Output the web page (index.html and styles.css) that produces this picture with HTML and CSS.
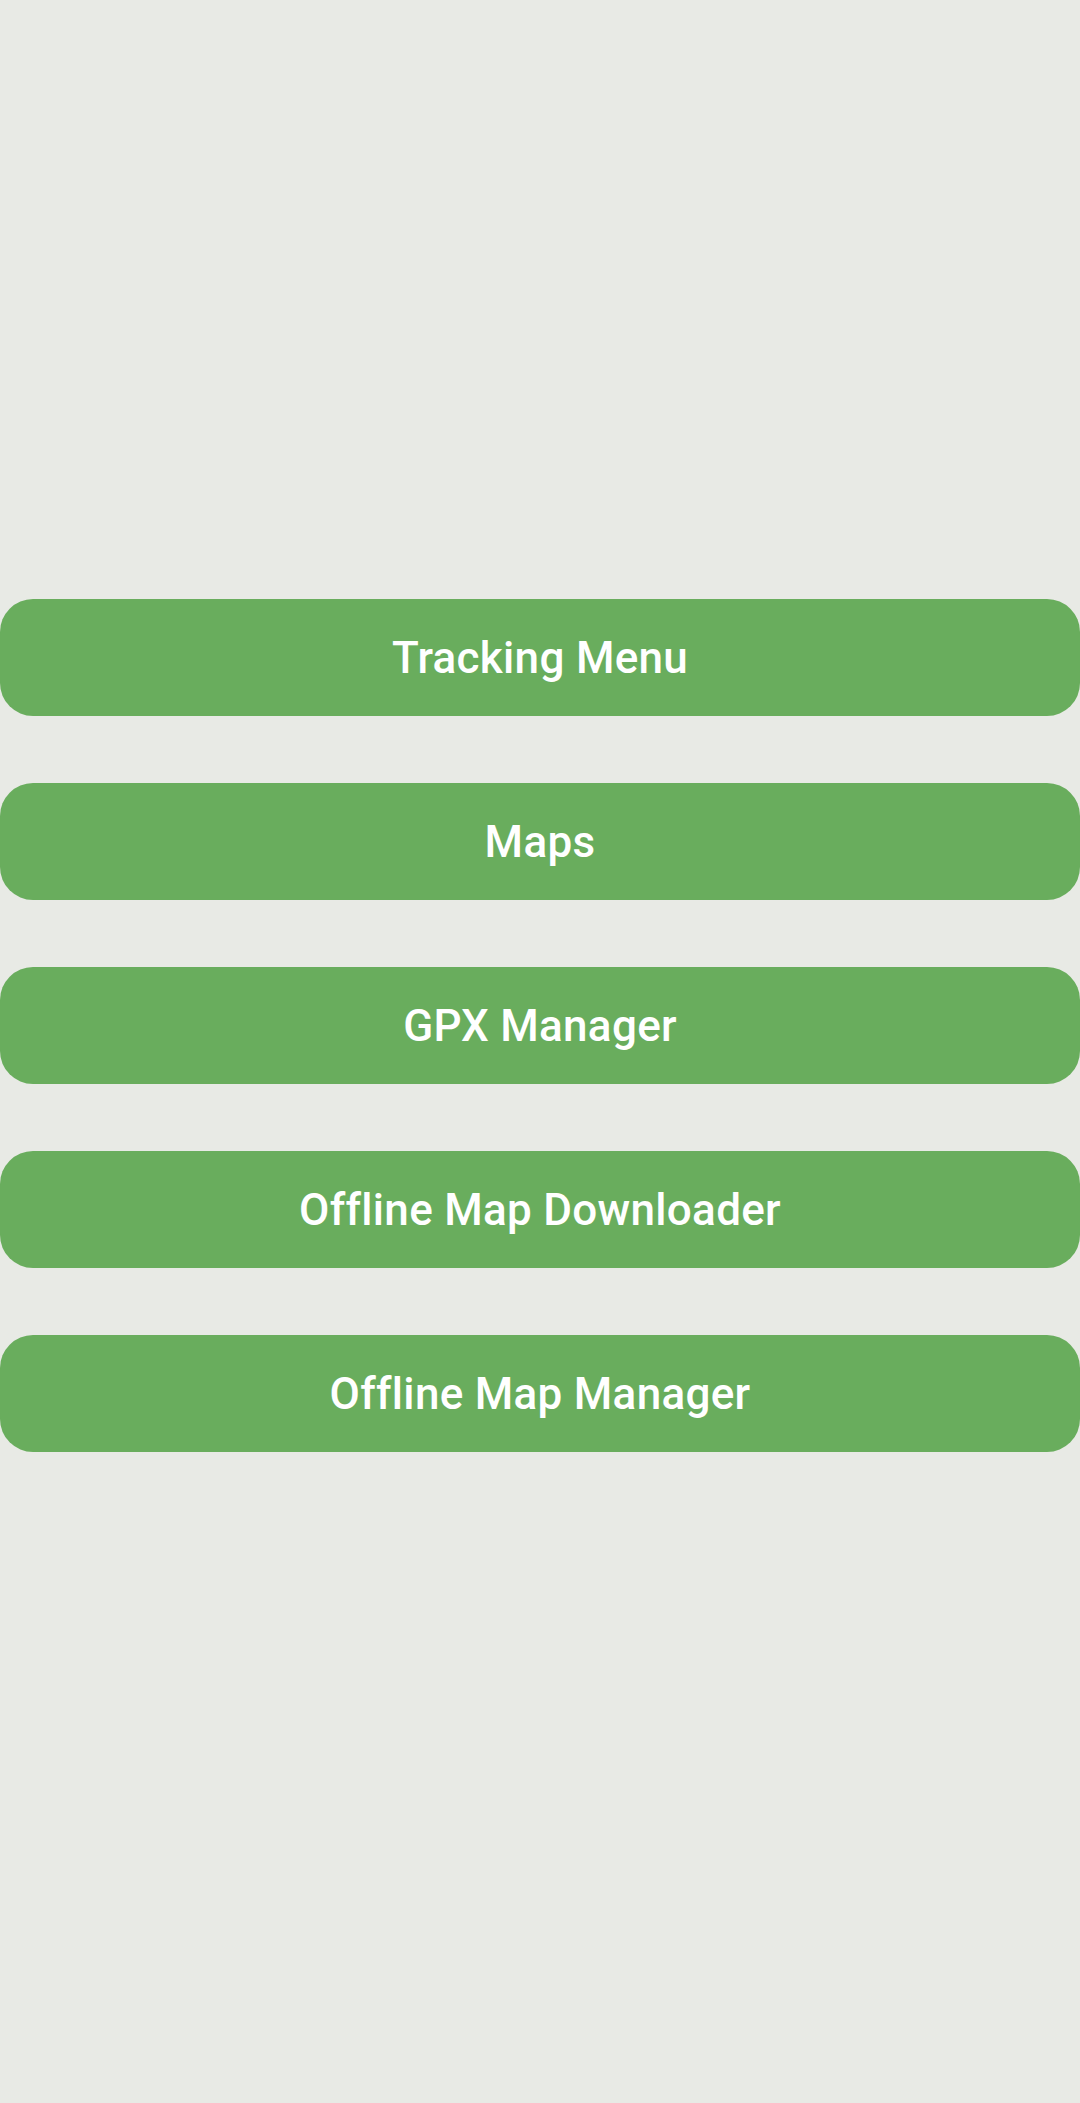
FILE: index.html
```html
<!DOCTYPE html>
<html>
<head>
<meta charset="utf-8">
<link rel="stylesheet" href="styles.css">
</head>
<body>
<main class="menu">
  <button class="btn">Tracking Menu</button>
  <button class="btn">Maps</button>
  <button class="btn">GPX Manager</button>
  <button class="btn">Offline Map Downloader</button>
  <button class="btn">Offline Map Manager</button>
</main>
</body>
</html>
```
FILE: styles.css
```css
html, body {
  margin: 0;
  padding: 0;
  background: #e8eae5;
  width: 1080px;
  height: 2103px;
  overflow: hidden;
}
.menu {
  display: flex;
  flex-direction: column;
  gap: 67px;
  padding-top: 599px;
}
.btn {
  display: flex;
  align-items: center;
  justify-content: center;
  height: 117px;
  width: 1080px;
  border: none;
  border-radius: 33px;
  background: #69ad5d;
  color: #ffffff;
  font-family: Roboto, "Noto Sans", sans-serif;
  font-size: 44px;
  font-weight: 500;
  letter-spacing: 0.3px;
  padding: 0;
  margin: 0;
}
```
